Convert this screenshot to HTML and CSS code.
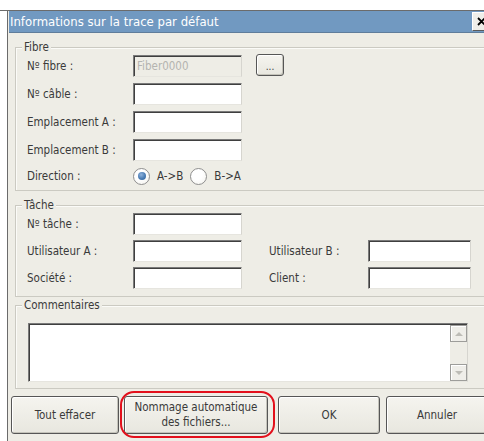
FILE: index.html
```html
<!DOCTYPE html>
<html lang="fr">
<head>
<meta charset="utf-8">
<title>Informations sur la trace par défaut</title>
<link rel="stylesheet" href="styles.css">
</head>
<body>
<div class="screen">
  <div class="frame">
    <div class="dialog">
      <div class="titlebar">
        <span class="title">Informations sur la trace par défaut</span>
        <span class="close">
          <svg width="9" height="9" viewBox="0 0 9 9" aria-hidden="true">
            <path d="M1 1 L8 8 M8 1 L1 8" stroke="#000" stroke-width="1.8" fill="none"/>
          </svg>
        </span>
      </div>

      <section class="group group-fibre">
        <div class="group-title">Fibre</div>
        <div class="rows">
          <div class="row">
            <span class="label">Nº fibre :</span>
            <div class="field disabled">Fiber0000</div>
            <div class="btn browse">...</div>
          </div>
          <div class="row">
            <span class="label">Nº câble :</span>
            <div class="field"></div>
          </div>
          <div class="row">
            <span class="label">Emplacement A :</span>
            <div class="field"></div>
          </div>
          <div class="row">
            <span class="label">Emplacement B :</span>
            <div class="field"></div>
          </div>
          <div class="row row-radio">
            <span class="label">Direction :</span>
            <span class="radio checked"></span>
            <span class="radio-text">A-&gt;B</span>
            <span class="radio"></span>
            <span class="radio-text">B-&gt;A</span>
          </div>
        </div>
      </section>

      <section class="group group-task">
        <div class="group-title">Tâche</div>
        <div class="rows">
          <div class="row">
            <span class="label">Nº tâche :</span>
            <div class="field"></div>
          </div>
          <div class="row">
            <span class="label">Utilisateur A :</span>
            <div class="field"></div>
            <span class="label label-right">Utilisateur B :</span>
            <div class="field field-right"></div>
          </div>
          <div class="row">
            <span class="label">Société :</span>
            <div class="field"></div>
            <span class="label label-right">Client :</span>
            <div class="field field-right"></div>
          </div>
        </div>
      </section>

      <section class="group group-comments">
        <div class="group-title">Commentaires</div>
        <div class="memo">
          <div class="memo-text"></div>
          <div class="scrollbar">
            <div class="scroll-btn up"><span class="arrow"></span></div>
            <div class="scroll-btn down"><span class="arrow"></span></div>
          </div>
        </div>
      </section>

      <div class="actions">
        <div class="btn btn-clear">Tout effacer</div>
        <div class="btn btn-auto">Nommage automatique<br>des fichiers...</div>
        <div class="btn btn-ok">OK</div>
        <div class="btn btn-cancel">Annuler</div>
      </div>
    </div>
  </div>
</div>
</body>
</html>
```

FILE: styles.css
```css
* { box-sizing: border-box; }

html, body {
  margin: 0;
  padding: 0;
  background: #ffffff;
  overflow: hidden;
}

body {
  width: 484px;
  height: 441px;
  font-family: "DejaVu Sans Condensed", "DejaVu Sans", sans-serif;
  font-stretch: condensed;
  font-size: 11.5px;
  color: #3a3a3a;
}

.screen { padding-top: 10px; }

.frame {
  border-top: 1px solid #6b6b6b;
  height: 431px;
}

.dialog {
  margin-left: 7px;
  width: 486px;
  height: 430px;
  border-left: 1px solid #6b6b6b;
  background: #eeede6;
  display: flex;
  flex-direction: column;
}

/* title bar */
.titlebar {
  height: 22px;
  flex: none;
  margin-left: 1px;
  background: #7199c1;
  border-bottom: 1px solid #5f7d9b;
  display: flex;
  align-items: center;
  justify-content: space-between;
}

.title {
  padding-left: 1px;
  color: #ffffff;
  font-size: 13px;
  line-height: 16px;
}

.close {
  width: 18px;
  height: 19px;
  margin-right: 3px;
  padding-left: 4px;
  background: #efeee9;
  border: 1px solid;
  border-color: #ffffff #5a5a5a #5a5a5a #ffffff;
  display: flex;
  align-items: center;
}

/* group boxes */
.group {
  flex: none;
  display: flex;
  flex-direction: column;
  margin: 0 6px 0 7px;
  border: 1px solid #cbcac2;
  box-shadow: inset 1px 1px 0 #fbfbf8;
}

.group-title {
  align-self: flex-start;
  margin: -7px 0 0 6px;
  padding: 0 2px;
  line-height: 13px;
  background: #eeede6;
}

.group-fibre { margin-top: 14px; padding-bottom: 5px; }
.group-task { margin-top: 14px; padding-bottom: 7px; }
.group-comments { margin-top: 8px; padding-bottom: 6px; }

.rows {
  display: flex;
  flex-direction: column;
  gap: 6px;
  padding: 1px 0 0 11px;
}

.group-task .rows { gap: 5px; }

.row {
  display: flex;
  align-items: center;
  height: 22px;
}

.row-radio { height: 18px; }

.label {
  width: 106px;
  flex: none;
  white-space: nowrap;
}

.label-right {
  width: 99px;
  margin-left: 27px;
}

/* text boxes */
.field {
  width: 109px;
  height: 22px;
  flex: none;
  background: #ffffff;
  border: 1px solid;
  border-color: #7a7a7a #d6d5cf #e6e5df #7a7a7a;
  box-shadow: inset 1px 1px 0 #3f3f3f;
}

.field-right { width: 103px; }

.field.disabled {
  background: #eeede6;
  color: #b4b4b0;
  padding: 3px 0 0 3px;
  line-height: 14px;
}

/* radio buttons */
.radio {
  width: 17px;
  height: 17px;
  flex: none;
  border-radius: 50%;
  border: 1px solid #8f8f8f;
  background: radial-gradient(circle at 40% 35%, #ffffff 40%, #f1f0ea 100%);
  position: relative;
}

.radio.checked::after {
  content: "";
  position: absolute;
  left: 3.5px;
  top: 3.5px;
  width: 8px;
  height: 8px;
  border-radius: 50%;
  background: radial-gradient(circle at 40% 35%, #8fb3dc 0%, #4a7cb4 55%, #2f5f97 100%);
}

.radio-text {
  margin: 0 7px 0 7px;
}

/* buttons */
.btn {
  display: flex;
  align-items: center;
  justify-content: center;
  text-align: center;
  flex: none;
  background: linear-gradient(#f5f4ef, #e8e7df);
  border: 1px solid #565656;
  border-radius: 3px;
  box-shadow: inset 1px 1px 0 #ffffff, inset -1px -1px 0 #c4c3ba;
  color: #3a3a3a;
}

.browse {
  width: 28px;
  height: 22px;
  margin: -2px 0 0 14px;
  font-size: 10px;
  padding-top: 2px;
}

/* comment box */
.memo {
  margin: 11px 0 0 12px;
  width: 440px;
  height: 59px;
  display: flex;
  background: #ffffff;
  border: 1px solid;
  border-color: #7a7a7a #d6d5cf #e6e5df #7a7a7a;
  box-shadow: inset 1px 1px 0 #3f3f3f;
}

.memo-text { flex: 1; }

.scrollbar {
  width: 17px;
  margin-top: 1px;
  background: #eeede6;
  display: flex;
  flex-direction: column;
  justify-content: space-between;
}

.scroll-btn {
  height: 17px;
  border: 1px solid #9d9d9a;
  background: #efeee9;
  box-shadow: inset 1px 1px 0 #ffffff;
  display: flex;
  align-items: center;
  justify-content: center;
}

.arrow {
  width: 0;
  height: 0;
  border-left: 4px solid transparent;
  border-right: 4px solid transparent;
}

.up .arrow { border-bottom: 4px solid #bdbcb6; }
.down .arrow { border-top: 4px solid #bdbcb6; }

/* bottom action buttons */
.actions {
  display: flex;
  margin: 7px 0 0 3px;
}

.actions .btn { height: 38px; }

.btn-clear { width: 108px; }
.btn-auto {
  width: 144px;
  margin-left: 5px;
  line-height: 15px;
  position: relative;
}
.btn-ok { width: 102px; margin-left: 10px; }
.btn-cancel { width: 102px; margin-left: 6px; }

/* red ring drawn around the file naming button */
.btn-auto::after {
  content: "";
  position: absolute;
  left: -5px;
  top: -6px;
  right: -8px;
  bottom: -5px;
  border: 2px solid #e3101c;
  border-radius: 14px;
}
```
